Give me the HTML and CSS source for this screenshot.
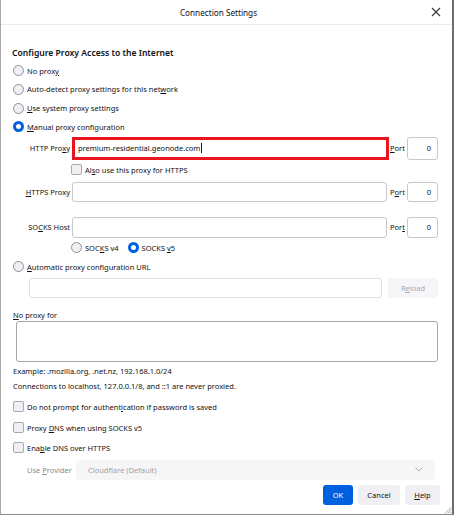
FILE: index.html
```html
<!DOCTYPE html>
<html>
<head>
<meta charset="utf-8">
<link rel="stylesheet" href="styles.css">
</head>
<body>
<div class="window">
  <div class="titlebar">
    <div class="title">Connection Settings</div>
    <div class="close">
      <svg width="10" height="10" viewBox="0 0 10 10"><path d="M1 1L9 9M9 1L1 9" stroke="#3a3a3a" stroke-width="1.1" fill="none"/></svg>
    </div>
  </div>
  <div class="content">
    <div class="heading">Configure Proxy Access to the Internet</div>
    <div class="radio-row"><span class="radio"></span><span>No prox<u>y</u></span></div>
    <div class="radio-row"><span class="radio"></span><span>Auto-detect proxy settings for this net<u>w</u>ork</span></div>
    <div class="radio-row"><span class="radio"></span><span><u>U</u>se system proxy settings</span></div>
    <div class="radio-row"><span class="radio checked"></span><span><u>M</u>anual proxy configuration</span></div>

    <div class="proxy-row first">
      <label class="plabel">HTTP Pro<u>x</u>y</label>
      <div class="input highlight">premium-residential.geonode.com<span class="caret"></span></div>
      <label class="port-label"><u>P</u>ort</label>
      <div class="input port">0</div>
    </div>
    <div class="check-row indent"><span class="checkbox"></span><span>Al<u>s</u>o use this proxy for HTTPS</span></div>
    <div class="proxy-row https">
      <label class="plabel"><u>H</u>TTPS Proxy</label>
      <div class="input"></div>
      <label class="port-label">P<u>o</u>rt</label>
      <div class="input port">0</div>
    </div>
    <div class="proxy-row socks">
      <label class="plabel">SO<u>C</u>KS Host</label>
      <div class="input"></div>
      <label class="port-label">Por<u>t</u></label>
      <div class="input port">0</div>
    </div>
    <div class="socks-versions">
      <span class="radio"></span><span>SOC<u>K</u>S v4</span>
      <span class="radio checked v5"></span><span>SOCKS <u>v</u>5</span>
    </div>
    <div class="radio-row auto"><span class="radio"></span><span><u>A</u>utomatic proxy configuration URL</span></div>
    <div class="url-row">
      <div class="input url"></div>
      <div class="btn reload">R<u>e</u>load</div>
    </div>
    <div class="noproxy-label"><u>N</u>o proxy for</div>
    <div class="textarea"></div>
    <div class="note example">Example: .mozilla.org, .net.nz, 192.168.1.0/24</div>
    <div class="note conn">Connections to localhost, 127.0.0.1/8, and ::1 are never proxied.</div>
    <div class="check-row c1"><span class="checkbox"></span><span>Do not prompt for authent<u>i</u>cation if password is saved</span></div>
    <div class="check-row c2"><span class="checkbox"></span><span>Proxy <u>D</u>NS when using SOCKS v5</span></div>
    <div class="check-row c3"><span class="checkbox"></span><span>Ena<u>b</u>le DNS over HTTPS</span></div>
    <div class="provider-row">
      <label class="provider-label">Use <u>P</u>rovider</label>
      <div class="select">
        <span>Cloudflare (Default)</span>
        <svg width="8" height="5" viewBox="0 0 8 5"><path d="M0.5 0.5L4 4L7.5 0.5" stroke="#b0b0b0" stroke-width="1" fill="none"/></svg>
      </div>
    </div>
    <div class="buttons">
      <div class="btn primary">OK</div>
      <div class="btn cancel">Cancel</div>
      <div class="btn help"><u>H</u>elp</div>
    </div>
  </div>
  <svg class="grip" width="8" height="8" viewBox="0 0 8 8"><path d="M7.5 1L1 7.5M7.5 3.5L3.5 7.5M7.5 6L6 7.5" stroke="#9a9a9a" stroke-width="0.8" fill="none"/></svg>
</div>
</body>
</html>
```
FILE: styles.css
```css
* { box-sizing: border-box; }
html, body { margin: 0; padding: 0; background: #ffffff; }
body {
  font-family: "Noto Sans", "Open Sans", sans-serif;
  font-size: 7.5px;
  color: #101014;
}
u { text-decoration: underline; text-underline-offset: 1px; }

.window {
  position: relative;
  width: 454px;
  height: 515px;
  border-left: 1px solid #a8a8a8;
  border-right: 2px solid #6e6e6e;
  border-bottom: 1px solid #8a8a8a;
  background: #ffffff;
  overflow: hidden;
  white-space: nowrap;
}

.titlebar {
  height: 25px;
  display: flex;
  align-items: center;
  border-bottom: 1px solid #ececec;
}
.title {
  flex: 1;
  text-align: center;
  font-size: 8.2px;
  padding-left: 14px;
}
.close {
  width: 28px;
  height: 24px;
  display: flex;
  align-items: center;
  justify-content: center;
  margin-right: 2px;
}

.content {
  padding: 0 14px 0 11px;
}

.heading {
  margin-top: 21px;
  height: 14px;
  line-height: 14px;
  font-size: 8.6px;
  font-weight: 600;
  margin-bottom: 1.5px;
}

.radio-row {
  height: 18.67px;
  display: flex;
  align-items: center;
  gap: 3px;
}
.radio {
  width: 11px;
  height: 11px;
  border-radius: 50%;
  border: 1px solid #8f8f9d;
  background: #f0f0f4;
  flex: none;
  margin-left: 1px;
}
.radio.checked {
  border: 3px solid #0061e0;
  background: #ffffff;
}

.proxy-row {
  display: flex;
  align-items: center;
  height: 21px;
}
.proxy-row.first { height: 23px; margin-top: 0.7px; }
.proxy-row.https { height: 20px; margin-top: 5px; }
.proxy-row.socks { height: 21px; margin-top: 15px; }
.plabel {
  width: 60px;
  text-align: right;
  padding-right: 2px;
  flex: none;
}
.input {
  height: 100%;
  flex: 1;
  border: 1px solid #c8c8cc;
  border-radius: 3px;
  background: #ffffff;
  display: flex;
  align-items: center;
  padding: 0 5px;
}
.input.highlight {
  border: 3px solid #e8141f;
  border-radius: 0;
  padding-left: 3px;
}
.caret {
  display: inline-block;
  width: 1px;
  height: 10px;
  background: #15141a;
  margin-left: 1px;
}
.port-label {
  width: 18px;
  padding-left: 1px;
  flex: none;
}
.proxy-row.https .port-label,
.proxy-row.socks .port-label { width: 20px; padding-left: 3px; }
.input.port {
  flex: none;
  width: 31px;
  justify-content: flex-end;
  padding-right: 6px;
}

.check-row {
  display: flex;
  align-items: center;
  gap: 3px;
  height: 14px;
}
.check-row.indent { margin-top: 3px; padding-left: 58px; }
.checkbox {
  width: 11px;
  height: 11px;
  border: 1px solid #a8a8b0;
  border-radius: 2px;
  background: #f0f0f4;
  flex: none;
  margin-left: 1px;
}

.socks-versions {
  display: flex;
  align-items: center;
  height: 14px;
  margin-top: 3px;
  padding-left: 58px;
  gap: 3px;
}
.radio.v5 { margin-left: 6px; }

.radio-row.auto { height: 18px; margin-top: 3px; }

.url-row {
  display: flex;
  height: 20px;
  margin-top: 2px;
  padding-left: 17px;
  gap: 6px;
}
.input.url { border-color: #dedee2; }
.btn {
  height: 20px;
  border-radius: 3px;
  background: #f0f0f4;
  display: flex;
  align-items: center;
  justify-content: center;
  padding: 0 7px;
}
.btn.reload {
  width: 50px;
  color: #a9a9ae;
  background: #f6f6f8;
}

.noproxy-label {
  margin-top: 11px;
  height: 12px;
  line-height: 12px;
  padding-left: 1px;
}
.textarea {
  margin-left: 4px;
  height: 41px;
  border: 1px solid #a5a5ab;
  border-radius: 3px;
}
.note {
  height: 12px;
  line-height: 12px;
  padding-left: 1px;
}
.note.example { margin-top: 3px; }
.note.conn { margin-top: 3px; }

.check-row.c1 { margin-top: 8px; }
.check-row.c2 { margin-top: 7px; }
.check-row.c3 { margin-top: 6px; }

.provider-row {
  display: flex;
  align-items: center;
  height: 20px;
  margin-top: 5px;
  padding-left: 15px;
  padding-right: 3px;
}
.provider-label {
  width: 49px;
  color: #8a8a90;
  flex: none;
}
.select {
  flex: 1;
  height: 100%;
  background: #f6f6f7;
  border-radius: 4px;
  display: flex;
  align-items: center;
  justify-content: space-between;
  padding: 0 12px 0 12px;
  color: #a0a0a6;
}

.buttons {
  display: flex;
  justify-content: flex-end;
  gap: 5px;
  margin-top: 5px;
  margin-right: -2px;
}
.buttons .btn { height: 20px; padding: 0; }
.btn.primary {
  background: #0061e0;
  color: #ffffff;
  width: 30px;
}
.btn.cancel { width: 42px; }
.btn.help { width: 35px; }

.grip {
  position: absolute;
  right: 0;
  bottom: 0;
}
```
